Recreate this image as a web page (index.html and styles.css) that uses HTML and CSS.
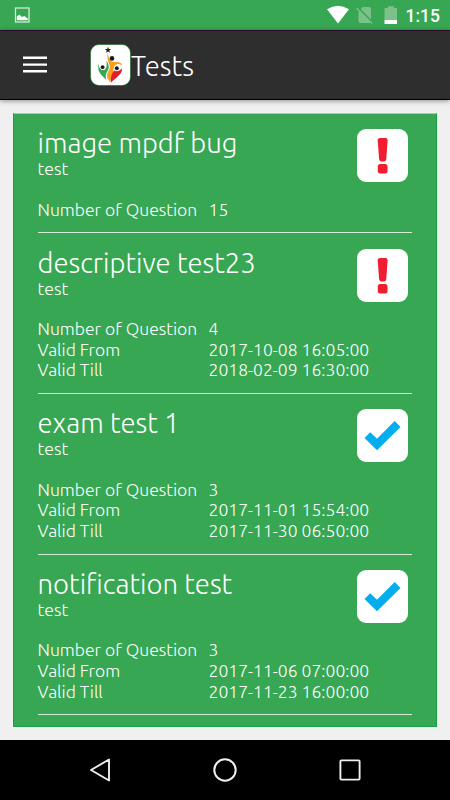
FILE: index.html
```html
<!DOCTYPE html>
<html lang="en">
<head>
    <meta charset="UTF-8">
    <meta name="viewport" content="width=device-width, initial-scale=1.0">
    <title>Tests</title>
    <link rel="stylesheet" href="styles.css">
</head>
<body>
    <div class="statusbar">
        <svg class="status-image" width="16" height="16" viewBox="0 0 16 16">
            <rect x="1.5" y="1" width="13.5" height="14" fill="none" stroke="#e2f1e5" stroke-width="1.2"/>
            <path d="M2.8 13.2V9.3L5.5 7.7L8 10L10.3 9L13.8 11.5V13.2Z" fill="#fff"/>
        </svg>
        <div class="status-icons">
            <svg width="24" height="20" viewBox="0 0 24 20">
                <path d="M1 4.3Q12 -3 23 4.3L12 18.5Z" fill="#fff"/>
            </svg>
            <svg class="status-sim" width="18" height="20" viewBox="0 0 18 20">
                <path d="M2.5 6L6.5 1H13Q15 1 15 3V17H4.5Q2.5 17 2.5 15Z" fill="#7dc18a"/>
                <path d="M1.5 1.5L17 17" stroke="#37a753" stroke-width="2.2"/>
                <path d="M.5 2L16 17.5" stroke="#7dc18a" stroke-width="1.4"/>
            </svg>
            <svg class="status-battery" width="14" height="20" viewBox="0 0 14 20">
                <path d="M.5 2H4V.3H10V2H13V14.5H.5Z" fill="#7dc18a"/>
                <path d="M.5 14H13V18H.5Z" fill="#fff"/>
            </svg>
            <span class="clock">1:15</span>
        </div>
    </div>
    <header>
        <svg class="menu" width="24" height="18" viewBox="0 0 24 18">
            <path d="M0 1.8H24M0 8.6H24M0 15.3H24" stroke="#fff" stroke-width="2.4"/>
        </svg>
        <svg class="logo" width="41" height="42" viewBox="0 0 41 42">
            <rect x=".5" y=".5" width="40" height="41" rx="8.5" fill="#fff" stroke="#0b6b18" stroke-width=".6"/>
            <path d="M18 2.7L18.8 5H21.2L19.3 6.5L20 8.8L18 7.4L16 8.8L16.7 6.5L14.8 5H17.2Z" fill="#222"/>
            <path d="M8.8 18.5C8.3 22 9.5 25.5 13 26C16.5 26 17.3 21 16.3 16.5C19.5 20.5 19.3 24.5 17.3 27.5C15.3 30.5 15.5 32.5 16.3 36C12.5 31.5 8.5 29.5 8.3 24Q8 21 8.8 18.5Z" fill="#34a853"/>
            <path d="M17.6 9C18.3 12 19.3 16 22 17.6C25 19 31 16.5 32 21.5C29 18.5 24.5 20 23.8 24C23.3 28 22 33 19.8 38C18.3 35.5 16.5 33.5 17 30.5C18.5 26.5 21 24 19 19.5C17.3 16 17 12 17.6 9Z" fill="#f9a11b"/>
            <path d="M32 24.5C32.5 30 26.5 33 20.8 38.8C20.6 34 21.3 29.5 24.3 26.5Q28 28.5 32 24.5Z" fill="#e51c2c"/>
            <circle cx="22" cy="14.4" r="2.3" fill="#1c1c1c"/>
            <circle cx="12.8" cy="23.2" r="2.6" fill="#fff"/>
            <circle cx="12.6" cy="23.2" r="1.9" fill="#1c1c1c"/>
            <circle cx="26.8" cy="24.2" r="2.7" fill="#fff"/>
            <circle cx="26.8" cy="24.2" r="2" fill="#1c1c1c"/>
        </svg>
        <h1>Tests</h1>
    </header>
    <main>
        <div class="card">
            <div class="test">
                <div class="test-head">
                    <div>
                        <h2>image mpdf bug</h2>
                        <p>test</p>
                    </div>
                    <div class="badge">
                        <svg width="51" height="53" viewBox="0 0 51 53">
                            <path d="M20.7 11.2Q20.7 9 23 9H28.5Q30.7 9 30.6 11.2L29.3 30Q29 32.5 26.8 32.5H24.6Q22.4 32.5 22.1 30Z" fill="#f01c30"/>
                            <rect x="20.8" y="35" width="9.7" height="9.5" rx="2.5" fill="#f01c30"/>
                        </svg>
                    </div>
                </div>
                <dl>
                    <dt>Number of Question</dt><dd>15</dd>
                </dl>
            </div>
            <div class="test">
                <div class="test-head">
                    <div>
                        <h2>descriptive test23</h2>
                        <p>test</p>
                    </div>
                    <div class="badge">
                        <svg width="51" height="53" viewBox="0 0 51 53">
                            <path d="M20.7 11.2Q20.7 9 23 9H28.5Q30.7 9 30.6 11.2L29.3 30Q29 32.5 26.8 32.5H24.6Q22.4 32.5 22.1 30Z" fill="#f01c30"/>
                            <rect x="20.8" y="35" width="9.7" height="9.5" rx="2.5" fill="#f01c30"/>
                        </svg>
                    </div>
                </div>
                <dl>
                    <dt>Number of Question</dt><dd>4</dd>
                    <dt>Valid From</dt><dd>2017-10-08 16:05:00</dd>
                    <dt>Valid Till</dt><dd>2018-02-09 16:30:00</dd>
                </dl>
            </div>
            <div class="test">
                <div class="test-head">
                    <div>
                        <h2>exam test 1</h2>
                        <p>test</p>
                    </div>
                    <div class="badge">
                        <svg width="51" height="53" viewBox="0 0 51 53">
                            <path d="M7.5 29L13.2 23.2L20 29.8L37.7 12L43.5 18L20 41.2Z" fill="#03adf0"/>
                        </svg>
                    </div>
                </div>
                <dl>
                    <dt>Number of Question</dt><dd>3</dd>
                    <dt>Valid From</dt><dd>2017-11-01 15:54:00</dd>
                    <dt>Valid Till</dt><dd>2017-11-30 06:50:00</dd>
                </dl>
            </div>
            <div class="test">
                <div class="test-head">
                    <div>
                        <h2>notification test</h2>
                        <p>test</p>
                    </div>
                    <div class="badge">
                        <svg width="51" height="53" viewBox="0 0 51 53">
                            <path d="M7.5 29L13.2 23.2L20 29.8L37.7 12L43.5 18L20 41.2Z" fill="#03adf0"/>
                        </svg>
                    </div>
                </div>
                <dl>
                    <dt>Number of Question</dt><dd>3</dd>
                    <dt>Valid From</dt><dd>2017-11-06 07:00:00</dd>
                    <dt>Valid Till</dt><dd>2017-11-23 16:00:00</dd>
                </dl>
            </div>
        </div>
    </main>
    <nav>
        <svg width="24" height="26" viewBox="0 0 24 26">
            <path d="M3 13L21 2.5V23.5Z" fill="none" stroke="#eee" stroke-width="1.9" stroke-linejoin="round"/>
        </svg>
        <svg width="24" height="26" viewBox="0 0 24 26">
            <circle cx="12" cy="13" r="10.7" fill="none" stroke="#eee" stroke-width="2"/>
        </svg>
        <svg width="24" height="26" viewBox="0 0 24 26">
            <rect x="2.4" y="3.4" width="19.2" height="19.2" rx="1" fill="none" stroke="#eee" stroke-width="1.9"/>
        </svg>
    </nav>
</body>
</html>
```

FILE: styles.css
```css
* {
    box-sizing: border-box;
}
body {
    margin: 0;
    width: 450px;
    height: 800px;
    display: flex;
    flex-direction: column;
    overflow: hidden;
    font-family: Ubuntu, "Open Sans", sans-serif;
    font-weight: 300;
    color: white;
    background-color: #f0f0f0;
}
svg {
    display: block;
    flex: none;
}
h1, h2, p, dl, dd {
    margin: 0;
    font-weight: 300;
    white-space: nowrap;
}
.statusbar {
    height: 30px;
    flex: none;
    display: flex;
    justify-content: space-between;
    align-items: flex-start;
    padding: 5px 10px 0 14px;
    background-color: #37a753;
}
.status-image {
    margin-top: 2px;
}
.status-icons {
    display: flex;
}
.status-sim {
    margin: 1px 0 0 6px;
}
.status-battery {
    margin: 1px 8px 0 10px;
}
.clock {
    font-family: Roboto, sans-serif;
    font-weight: 500;
    font-size: 17.5px;
    line-height: 22px;
}
header {
    height: 70px;
    flex: none;
    display: flex;
    align-items: center;
    padding-left: 23px;
    border-top: 1px solid #280d29;
    border-bottom: 1px solid #000;
    background-color: #2e2e2e;
    box-shadow: 0 1px 5px rgba(0, 0, 0, 0.4);
}
.menu {
    margin-right: 43px;
}
h1 {
    padding-top: 2px;
    font-size: 27.5px;
    line-height: 36px;
}
main {
    flex: 1;
    padding: 13px 13px 0;
}
.card {
    height: 614px;
    padding: 0 24px 0 23.5px;
    background-color: #37a753;
    border: 1px solid #12a342;
    border-top: 1px solid #9fd0ab;
}
.test {
    padding-bottom: 12.1px;
    border-bottom: 1px solid #d4ecd9;
}
.test-head {
    height: 85.5px;
    display: flex;
    justify-content: space-between;
    padding: 15.3px 4px 0 0;
}
h2 {
    font-size: 27.5px;
    line-height: 27px;
}
p {
    font-size: 17.6px;
    line-height: 25px;
}
.badge {
    width: 51px;
    height: 53px;
    border-radius: 9px;
    background-color: white;
}
dl {
    display: grid;
    grid-template-columns: 171px 1fr;
    font-size: 17.55px;
    line-height: 20.7px;
}
nav {
    height: 60px;
    flex: none;
    display: flex;
    justify-content: space-between;
    align-items: center;
    padding: 0 88px;
    background-color: black;
}
```
